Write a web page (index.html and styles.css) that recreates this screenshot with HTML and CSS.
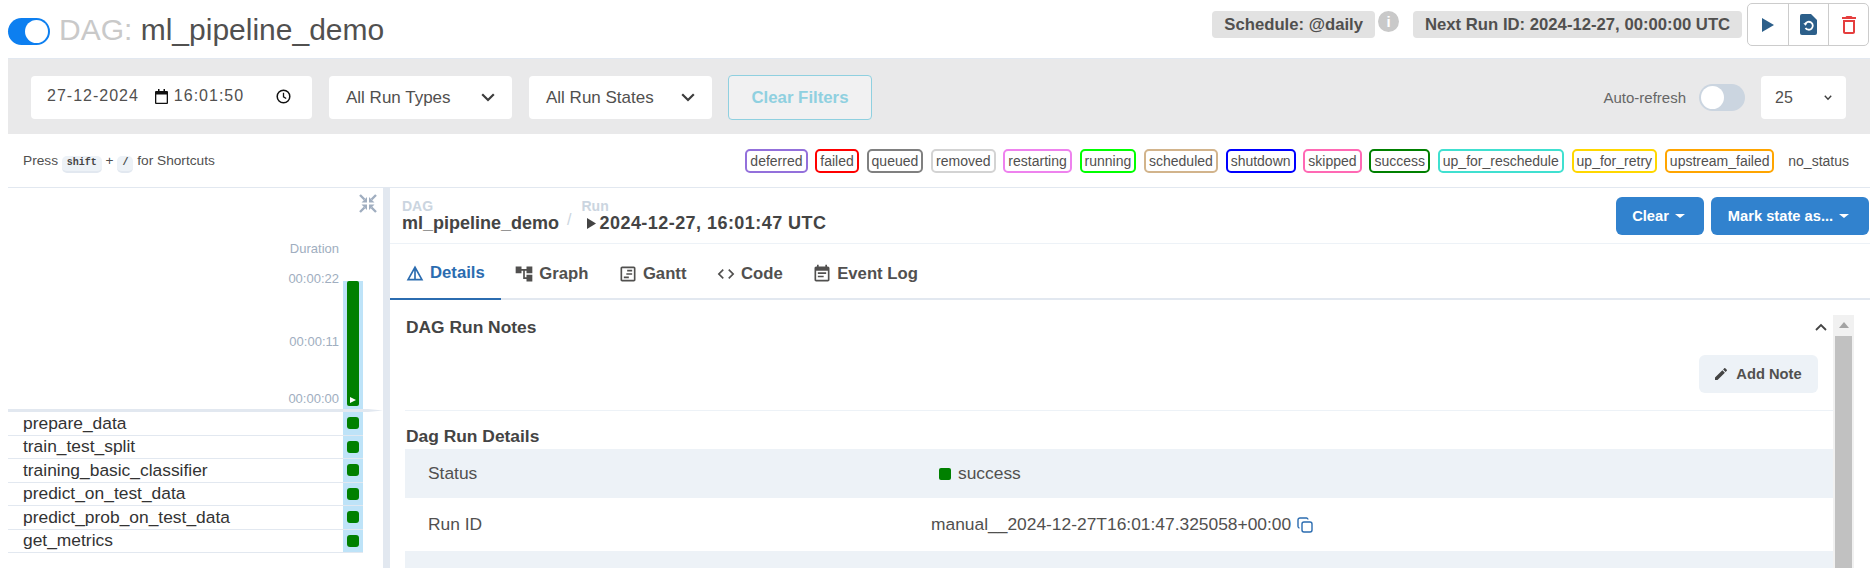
FILE: index.html
```html
<!DOCTYPE html>
<html lang="en">
<head>
  <meta charset="UTF-8">
  <meta name="viewport" content="width=device-width, initial-scale=1">
  <title>DAG: ml_pipeline_demo</title>
  <link rel="stylesheet" href="styles.css">
</head>
<body>
  <!-- Page header -->
  <header class="page-head">
    <span class="pause-toggle"><span class="pause-thumb"></span></span>
    <h1 class="dag-title"><span class="dag-prefix">DAG:</span> ml_pipeline_demo</h1>
    <div class="head-info">
      <span class="info-pill">Schedule: @daily</span>
      <span class="info-dot">i</span>
      <span class="info-pill next-run">Next Run ID: 2024-12-27, 00:00:00 UTC</span>
      <div class="action-group">
        <span class="action-btn">
          <svg width="12" height="14" viewBox="0 0 12 14"><path d="M0 0l12 7-12 7z" fill="#2c5f8a"/></svg>
        </span>
        <span class="action-btn">
          <svg width="17" height="21" viewBox="0 0 17 21"><path d="M2 0h9l6 6v13a2 2 0 0 1-2 2H2a2 2 0 0 1-2-2V2a2 2 0 0 1 2-2z" fill="#2c5f8a"/><path d="M5.2 10a4 4 0 1 1 .3 4" fill="none" stroke="#fff" stroke-width="1.8"/><path d="M3.4 9.2h4l-2 2.6z" fill="#fff"/></svg>
        </span>
        <span class="action-btn">
          <svg width="22" height="24" viewBox="3 0 18 24"><path d="M6 19c0 1.1.9 2 2 2h8c1.1 0 2-.9 2-2V7H6v12zM8 9h8v10H8V9zm7.5-5l-1-1h-5l-1 1H5v2h14V4z" fill="#e53e3e"/></svg>
        </span>
      </div>
    </div>
  </header>

  <!-- Filters -->
  <section class="filter-bar">
    <div class="field date-field">
      <span class="date-text">27-12-2024</span>
      <svg class="cal-icon" width="13" height="15" viewBox="0 0 13 15"><path d="M1 2h11a1 1 0 0 1 1 1v11a1 1 0 0 1-1 1H1a1 1 0 0 1-1-1V3a1 1 0 0 1 1-1zm.3 3.5v8.2h10.4V5.5z" fill="#111"/><path d="M3 0h1.5v2H3zM8.500 0H10v2H8.500z" fill="#111"/></svg>
      <span class="date-text">16:01:50</span>
      <svg class="clock-icon" width="15" height="15" viewBox="0 0 15 15"><circle cx="7.500" cy="7.500" r="6.300" fill="none" stroke="#111" stroke-width="1.500"/><path d="M7.500 3.800v4l2.700 1.700" fill="none" stroke="#111" stroke-width="1.300"/></svg>
    </div>
    <div class="field select-field">All Run Types
      <svg width="14" height="9" viewBox="0 0 14 9"><path d="M1.200 1.200L7 7l5.800-5.800" fill="none" stroke="#3d3d3d" stroke-width="2.200"/></svg>
    </div>
    <div class="field select-field">All Run States
      <svg width="14" height="9" viewBox="0 0 14 9"><path d="M1.200 1.200L7 7l5.800-5.800" fill="none" stroke="#3d3d3d" stroke-width="2.200"/></svg>
    </div>
    <span class="clear-filters">Clear Filters</span>
    <div class="refresh">
      <span class="refresh-label">Auto-refresh</span>
      <span class="refresh-switch"><span class="refresh-thumb"></span></span>
      <div class="field limit-field">25
        <svg width="8" height="6" viewBox="0 0 8 6"><path d="M.8.800L4 4.200 7.200.800" fill="none" stroke="#3d3d3d" stroke-width="1.400"/></svg>
      </div>
    </div>
  </section>

  <!-- Shortcut hint and state legend -->
  <section class="legend-row">
    <p class="shortcut-hint">Press <kbd>shift</kbd> + <kbd>/</kbd> for Shortcuts</p>
    <div class="legend">
      <span class="chip" style="border-color:#9370db">deferred</span>
      <span class="chip" style="border-color:#ff0000">failed</span>
      <span class="chip" style="border-color:#808080">queued</span>
      <span class="chip" style="border-color:#d3d3d3">removed</span>
      <span class="chip" style="border-color:#ee82ee">restarting</span>
      <span class="chip" style="border-color:#00ff00">running</span>
      <span class="chip" style="border-color:#d2b48c">scheduled</span>
      <span class="chip" style="border-color:#0000ff">shutdown</span>
      <span class="chip" style="border-color:#ff69b4">skipped</span>
      <span class="chip" style="border-color:#008000">success</span>
      <span class="chip" style="border-color:#40e0d0">up_for_reschedule</span>
      <span class="chip" style="border-color:#ffd700">up_for_retry</span>
      <span class="chip" style="border-color:#ffa500">upstream_failed</span>
      <span class="chip chip-none">no_status</span>
    </div>
  </section>

  <main class="split">
    <!-- Grid pane -->
    <aside class="tree-pane">
      <div class="tree-tools">
        <svg width="18" height="19" viewBox="0 0 18 19" fill="#a0aec0" stroke="#a0aec0"><path d="M8 8.500V3L2.500 8.500zM10 8.500V3l5.500 5.500zM8 10.500V16l-5.500-5.500zM10 10.500V16l5.500-5.500z" stroke="none"/><path d="M1 1l4.500 4.500M17 1l-4.500 4.500M1 18l4.500-4.500M17 18l-4.500-4.500" stroke-width="2.400" fill="none"/></svg>
      </div>
      <div class="tree-chart">
        <div class="duration-axis">
          <span class="axis-title">Duration</span>
          <span class="axis-top">00:00:22</span>
          <span class="axis-mid">00:00:11</span>
          <span class="axis-low">00:00:00</span>
        </div>
        <div class="duration-col">
          <div class="duration-bar">
            <svg width="6" height="6" viewBox="0 0 6 6"><path d="M0 0l6 3-6 3z" fill="#fff"/></svg>
          </div>
        </div>
      </div>
      <div class="tree-rule"></div>
      <div class="task-row"><span class="task-name">prepare_data</span><span class="task-cell"><i class="task-state"></i></span></div>
      <div class="task-row"><span class="task-name">train_test_split</span><span class="task-cell"><i class="task-state"></i></span></div>
      <div class="task-row"><span class="task-name">training_basic_classifier</span><span class="task-cell"><i class="task-state"></i></span></div>
      <div class="task-row"><span class="task-name">predict_on_test_data</span><span class="task-cell"><i class="task-state"></i></span></div>
      <div class="task-row"><span class="task-name">predict_prob_on_test_data</span><span class="task-cell"><i class="task-state"></i></span></div>
      <div class="task-row"><span class="task-name">get_metrics</span><span class="task-cell"><i class="task-state"></i></span></div>
    </aside>

    <div class="splitter"></div>

    <!-- Details pane -->
    <section class="detail-pane">
      <div class="crumb-row">
        <div class="crumbs">
          <div class="crumb">
            <span class="crumb-label">DAG</span>
            <span class="crumb-value">ml_pipeline_demo</span>
          </div>
          <span class="crumb-sep">/</span>
          <div class="crumb crumb-run">
            <span class="crumb-label">Run</span>
            <span class="crumb-value run-date"><svg width="9" height="11" viewBox="0 0 9 11"><path d="M0 0l9 5.500L0 11z" fill="#444"/></svg>2024-12-27, 16:01:47 UTC</span>
          </div>
        </div>
        <div class="crumb-actions">
          <span class="blue-btn clear-btn">Clear<i class="caret"></i></span>
          <span class="blue-btn mark-btn">Mark state as...<i class="caret"></i></span>
        </div>
      </div>

      <nav class="tabs">
        <span class="tab tab-active">
          <svg width="20" height="20" viewBox="0 0 24 24"><path d="M12 3L2 21h20L12 3zm1 5.920L18.600 19H13V8.920zm-2 0V19H5.400L11 8.920z"/></svg>Details
        </span>
        <span class="tab">
          <svg width="20" height="20" viewBox="0 0 24 24"><path d="M22 11V3h-7v3H9V3H2v8h7V8h2v10h4v3h7v-8h-7v3h-2V8h2v3z"/></svg>Graph
        </span>
        <span class="tab">
          <svg width="20" height="20" viewBox="0 0 24 24"><path d="M19 3H5c-1.100 0-2 .9-2 2v14c0 1.100.9 2 2 2h14c1.100 0 2-.9 2-2V5c0-1.100-.9-2-2-2zm0 16H5V5h14v14zM11 7h6v2h-6zm-1 4h7v2h-7zm-3 4h6v2H7z"/></svg>Gantt
        </span>
        <span class="tab">
          <svg width="20" height="20" viewBox="0 0 24 24"><path d="M9.400 16.600L4.800 12l4.600-4.600L8 6l-6 6 6 6 1.400-1.400zm5.200 0l4.600-4.600-4.600-4.600L16 6l6 6-6 6-1.400-1.400z"/></svg>Code
        </span>
        <span class="tab">
          <svg width="20" height="20" viewBox="0 0 24 24"><path d="M17 10H7v2h10v-2zm2-7h-1V1h-2v2H8V1H6v2H5c-1.110 0-1.990.9-1.990 2L3 19c0 1.100.89 2 2 2h14c1.100 0 2-.9 2-2V5c0-1.100-.9-2-2-2zm0 16H5V8h14v11zm-5-5H7v2h7v-2z"/></svg>Event Log
        </span>
      </nav>

      <div class="detail-body">
        <div class="detail-scroll">
          <div class="notes-head">
            <h3 class="section-title">DAG Run Notes</h3>
            <svg width="12" height="8" viewBox="0 0 12 8"><path d="M1 7l5-5 5 5" fill="none" stroke="#444" stroke-width="1.800"/></svg>
          </div>
          <div class="notes-actions">
            <span class="add-note">
              <svg width="12" height="12" viewBox="3 3 18 18"><path d="M3 17.250V21h3.750L17.810 9.940l-3.750-3.750L3 17.250zM20.710 7.040c.39-.39.39-1.020 0-1.410l-2.340-2.340c-.39-.39-1.020-.39-1.410 0l-1.830 1.830 3.750 3.750 1.830-1.830z" fill="#444"/></svg>Add Note
            </span>
          </div>
          <h3 class="section-title details-title">Dag Run Details</h3>
          <div class="info-row row-status">
            <span class="info-key">Status</span>
            <span class="info-val status-val"><i class="status-dot"></i>success</span>
          </div>
          <div class="info-row row-plain">
            <span class="info-key">Run ID</span>
            <span class="info-val">manual__2024-12-27T16:01:47.325058+00:00
              <svg width="16" height="16" viewBox="0 0 16 16" fill="none" stroke="#2b6cb0" stroke-width="1.400"><rect x="5" y="5" width="10" height="10" rx="2"/><path d="M11 2.500A1.800 1.800 0 0 0 9.500 1H3a2 2 0 0 0-2 2v6.500A1.800 1.800 0 0 0 2.500 11"/></svg>
            </span>
          </div>
          <div class="info-row row-empty"></div>
        </div>
        <div class="scrollbar">
          <span class="scroll-up"></span>
          <span class="scroll-thumb"></span>
        </div>
      </div>
    </section>
  </main>
</body>
</html>
```

FILE: styles.css
```css
* {
  box-sizing: border-box;
}
html, body {
  height: 568px;
  overflow: hidden;
}
body {
  margin: 0;
  padding-left: 8px;
  font-family: "Liberation Sans", Arial, sans-serif;
  font-size: 16px;
  color: #51504f;
  background: #fff;
}

/* header */
.page-head {
  display: flex;
  align-items: flex-start;
  height: 58px;
}
.pause-toggle {
  width: 42px;
  height: 27px;
  margin-top: 18px;
  padding: 2px;
  display: flex;
  justify-content: flex-end;
  background: #0d7ff0;
  border-radius: 14px;
}
.pause-thumb {
  width: 23px;
  height: 23px;
  border-radius: 50%;
  background: #fff;
}
.dag-title {
  margin: 13px 0 0 9px;
  font-size: 30px;
  line-height: 34px;
  font-weight: 400;
}
.dag-prefix {
  color: #c9c9c9;
}
.head-info {
  margin-left: auto;
  padding-top: 3px;
  display: flex;
  align-items: flex-start;
  padding-right: 1px;
}
.info-pill {
  margin-top: 8px;
  height: 27px;
  padding: 0 12px;
  display: flex;
  align-items: center;
  background: #e2e2e2;
  border-radius: 4px;
  font-size: 16.7px;
  font-weight: 700;
}
.info-dot {
  width: 21px;
  height: 21px;
  margin: 8px 14px 0 3px;
  border-radius: 50%;
  background: #c9c9c9;
  color: #fff;
  font-size: 15px;
  font-weight: 700;
  text-align: center;
  line-height: 21px;
}
.next-run {
  width: 329px;
  white-space: nowrap;
}
.action-group {
  margin-left: 5px;
  display: flex;
  height: 43px;
  border: 1px solid #ccc;
  border-radius: 5px;
}
.action-btn {
  width: 40px;
  display: flex;
  align-items: center;
  justify-content: center;
  border-left: 1px solid #ccc;
}
.action-btn:first-child {
  border-left: none;
}

/* filters */
.filter-bar {
  height: 76px;
  padding: 17px 24px 0 23px;
  display: flex;
  align-items: flex-start;
  background: #e9e9ea;
  border-top: 1px solid #e2e8f0;
}
.field {
  height: 43px;
  display: flex;
  align-items: center;
  background: #fff;
  border-radius: 4px;
  font-size: 16px;
}
.date-field {
  width: 281px;
  padding-left: 16px;
  padding-bottom: 3px;
}
.date-text {
  letter-spacing: 1px;
}
.cal-icon {
  margin: 0 6px 0 16px;
}
.clock-icon {
  margin-left: 32px;
}
.select-field {
  width: 183px;
  margin-left: 17px;
  padding: 0 17px;
  justify-content: space-between;
  font-size: 17px;
}
.clear-filters {
  width: 144px;
  height: 45px;
  margin: -1px 0 0 16px;
  display: flex;
  align-items: center;
  justify-content: center;
  border: 1px solid #8fd0e0;
  border-radius: 4px;
  background: #f1f1f2;
  color: #8fd0e0;
  font-size: 16.8px;
  font-weight: 700;
}
.refresh {
  margin-left: auto;
  display: flex;
  align-items: center;
}
.refresh-label {
  font-size: 15px;
  margin-right: 13px;
  color: #666;
}
.refresh-switch {
  width: 46px;
  height: 27px;
  padding: 2px;
  background: #cbd5e0;
  border-radius: 14px;
}
.refresh-thumb {
  display: block;
  width: 23px;
  height: 23px;
  border-radius: 50%;
  background: #fff;
}
.limit-field {
  width: 85px;
  margin-left: 16px;
  padding: 0 14px;
  justify-content: space-between;
}

/* legend */
.legend-row {
  height: 54px;
  padding: 15px 21px 0 15px;
  display: flex;
  align-items: flex-start;
  justify-content: space-between;
  border-bottom: 1px solid #e2e8f0;
}
.shortcut-hint {
  margin: 2px 0 0;
  font-size: 13.7px;
  line-height: 20px;
  color: #51504f;
}
kbd {
  display: inline-block;
  height: 17px;
  padding: 0 5px;
  background: #edf2f7;
  border-bottom: 2px solid #e2e8f0;
  border-radius: 5px;
  font-family: "Liberation Mono", monospace;
  font-size: 10px;
  font-weight: 700;
  line-height: 14px;
  color: #444;
}
.legend {
  display: flex;
  gap: 7.8px;
}
.chip {
  height: 24px;
  padding: 0 3px;
  display: flex;
  align-items: center;
  border: 2px solid;
  border-radius: 5px;
  font-size: 14px;
  color: #51504f;
}
.chip-none {
  padding-left: 4px;
  border-color: transparent;
  padding-right: 0;
  border-right: none;
}

/* split layout */
.split {
  display: grid;
  grid-template-columns: 375px 7px 1fr;
  height: 380px;
}
.splitter {
  background: #e2e8f0;
}

/* grid pane */
.tree-tools {
  height: 36px;
  padding: 6px 6px 0 0;
  display: flex;
  justify-content: flex-end;
}
.tree-chart {
  height: 185px;
  padding-right: 20px;
  display: flex;
  justify-content: flex-end;
  align-items: flex-end;
}
.duration-axis {
  height: 185px;
  padding-right: 4px;
  display: flex;
  flex-direction: column;
  align-items: flex-end;
  font-size: 13px;
  color: #a0aec0;
}
.axis-title {
  margin-top: 17px;
  line-height: 16px;
}
.axis-top {
  margin-top: 14px;
  line-height: 16px;
}
.axis-mid {
  margin-top: 47px;
  line-height: 16px;
}
.axis-low {
  margin-top: 41px;
  line-height: 16px;
}
.duration-col {
  width: 20px;
  height: 128px;
  padding: 0 4px;
  background: #bee3f8;
}
.duration-bar {
  height: 125px;
  padding: 0 0 3px 3px;
  display: flex;
  align-items: flex-end;
  background: #008000;
  border-radius: 2px;
}
.tree-rule {
  height: 3px;
  background: #e2e8f0;
  clip-path: polygon(0 0, 96% 0, 100% 50%, 96% 100%, 0 100%);
}
.task-row {
  height: 23.5px;
  margin-right: 20px;
  display: flex;
  align-items: center;
  border-bottom: 1px solid #e2e8f0;
}
.task-name {
  flex: 1;
  padding-left: 15px;
  font-size: 17.4px;
  color: #333;
}
.task-cell {
  width: 20px;
  height: 100%;
  display: flex;
  align-items: center;
  justify-content: center;
  background: #bee3f8;
}
.task-state {
  width: 12px;
  height: 12px;
  background: #008000;
  border-radius: 3px;
}

/* details pane */
.crumb-row {
  height: 56px;
  padding: 9px 1px 0 12px;
  display: flex;
  justify-content: space-between;
  border-bottom: 1px solid #edf2f7;
}
.crumbs {
  display: flex;
  align-items: flex-start;
  padding-top: 3px;
}
.crumb {
  display: flex;
  flex-direction: column;
}
.crumb-label {
  font-size: 14px;
  line-height: 12px;
  font-weight: 700;
  color: #cbd5e0;
}
.crumb-value {
  font-size: 18px;
  line-height: 22px;
  font-weight: 700;
  color: #444;
}
.run-date {
  letter-spacing: .45px;
}
.crumb-value svg {
  margin: 0 4px 0 5px;
}
.crumb-sep {
  margin: 11px 10px 0 8px;
  color: #cbd5e0;
}
.crumb-actions {
  display: flex;
  gap: 7px;
}
.blue-btn {
  height: 38px;
  padding-right: 3px;
  display: flex;
  align-items: center;
  justify-content: center;
  background: #3182ce;
  border-radius: 6px;
  font-size: 14.7px;
  font-weight: 700;
  color: #fff;
}
.clear-btn {
  width: 88px;
}
.mark-btn {
  width: 158px;
}
.caret {
  margin-left: 6px;
  border-top: 4px solid #fff;
  border-left: 5px solid transparent;
  border-right: 5px solid transparent;
}
.tabs {
  height: 56px;
  display: flex;
  border-bottom: 2px solid #e2e8f0;
  padding-left: 16px;
  gap: 29.5px;
}
.tab {
  height: 56px;
  display: flex;
  align-items: center;
  gap: 5px;
  padding-top: 4px;
  font-weight: 700;
  font-size: 16.7px;
  color: #51504f;
}
.tab svg {
  fill: #51504f;
}
.tab-active {
  margin-left: -16px;
  padding: 4px 16px 0 15px;
  margin-right: -16px;
  border-bottom: 2px solid #2b6cb0;
  color: #2b6cb0;
}
.tab-active svg {
  fill: #2b6cb0;
}
.detail-body {
  display: flex;
  padding-right: 16px;
}
.detail-scroll {
  flex: 1;
  padding: 15px 0 0 15px;
}
.notes-head {
  height: 24px;
  padding-right: 6px;
  display: flex;
  align-items: center;
  justify-content: space-between;
}
.section-title {
  margin: 0;
  padding-left: 1px;
  font-size: 17.4px;
  font-weight: 700;
  color: #444;
}
.notes-actions {
  height: 72px;
  padding: 16px 15px 0 0;
  display: flex;
  justify-content: flex-end;
  border-bottom: 1px solid #edf2f7;
}
.add-note {
  width: 119px;
  height: 38px;
  display: flex;
  align-items: center;
  justify-content: center;
  gap: 9px;
  background: #edf2f7;
  border-radius: 6px;
  font-size: 14.7px;
  font-weight: 700;
}
.details-title {
  height: 38px;
  padding-top: 16px;
  line-height: 18px;
}
.info-row {
  display: flex;
  align-items: center;
  padding-left: 23px;
  font-size: 17.4px;
}
.row-status,
.row-empty {
  background: #edf2f7;
}
.row-status {
  height: 49px;
}
.row-plain {
  height: 53px;
}
.row-empty {
  height: 17px;
}
.info-key {
  width: 503px;
}
.info-val {
  display: flex;
  align-items: center;
  gap: 6px;
}
.status-val {
  padding-left: 8px;
}
.status-dot {
  width: 12px;
  height: 12px;
  margin-right: 1px;
  background: #008000;
  border-radius: 2px;
}
.scrollbar {
  width: 21px;
  margin-top: 15px;
  display: flex;
  flex-direction: column;
  align-items: center;
  background: #f1f1f1;
}
.scroll-up {
  width: 100%;
  height: 21px;
  display: flex;
  justify-content: center;
  padding-top: 7px;
}
.scroll-up::before {
  content: "";
  height: 0;
  border-bottom: 6px solid #a3a3a3;
  border-left: 5px solid transparent;
  border-right: 5px solid transparent;
}
.scroll-thumb {
  width: 17px;
  flex: 1;
  background: #c1c1c1;
}
```
